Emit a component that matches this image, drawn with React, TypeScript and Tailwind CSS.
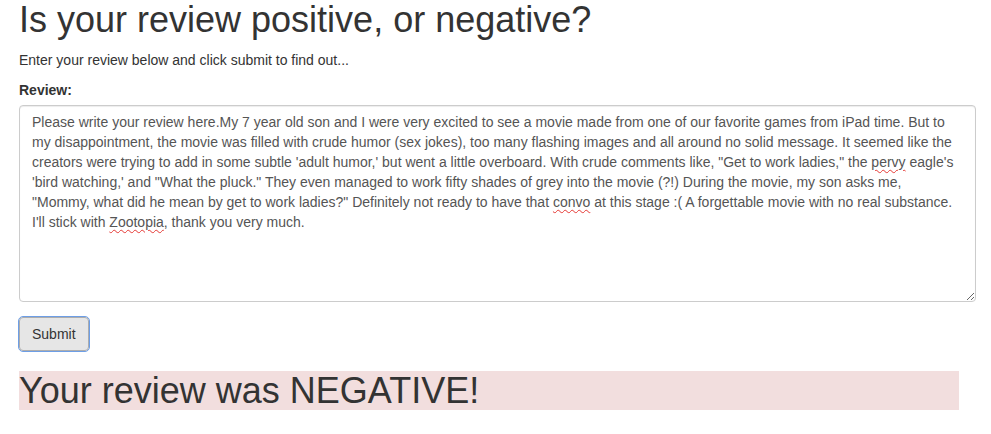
import React from 'react';

const Typo: React.FC<{ children: React.ReactNode }> = ({ children }) => (
  <span className="underline decoration-wavy decoration-[#e53935] decoration-1 underline-offset-[2px]">{children}</span>
);

const App: React.FC = () => {
  return (
    <div className="min-h-screen bg-white pl-[19px] pr-[15px] text-[14px] leading-[20px] text-[#333] font-['Liberation_Sans',Arial,sans-serif]">
      <h1 className="m-0 mb-[10px] text-[36px] leading-[1.1] font-normal">Is your review positive, or negative?</h1>
      <p className="mb-[10px]">Enter your review below and click submit to find out...</p>

      <form className="block" onSubmit={(e) => e.preventDefault()}>
        <div className="mb-[15px]">
          <label className="inline-block mb-[5px] font-bold">Review:</label>
          {/* styled like a textarea so the spellcheck squiggles can be shown */}
          <div className="h-[197px] w-full resize overflow-auto rounded-[4px] border border-[#ccc] bg-white px-[12px] py-[6px] text-[#555] shadow-[inset_0_1px_1px_rgba(0,0,0,0.075)]">
            <div className="whitespace-nowrap">Please write your review here.My 7 year old son and I were very excited to see a movie made from one of our favorite games from iPad time. But to</div>
            <div className="whitespace-nowrap">my disappointment, the movie was filled with crude humor (sex jokes), too many flashing images and all around no solid message. It seemed like the</div>
            <div className="whitespace-nowrap">creators were trying to add in some subtle 'adult humor,' but went a little overboard. With crude comments like, "Get to work ladies," the <Typo>pervy</Typo> eagle's</div>
            <div className="whitespace-nowrap">'bird watching,' and "What the pluck." They even managed to work fifty shades of grey into the movie (?!) During the movie, my son asks me,</div>
            <div className="whitespace-nowrap">"Mommy, what did he mean by get to work ladies?" Definitely not ready to have that <Typo>convo</Typo> at this stage :( A forgettable movie with no real substance.</div>
            <div className="whitespace-nowrap">I'll stick with <Typo>Zootopia</Typo>, thank you very much.</div>
          </div>
        </div>
        <button
          type="submit"
          className="h-[34px] rounded-[4px] border border-[#adadad] bg-[#e6e6e6] px-[12px] py-[6px] text-[14px] leading-[20px] text-[#333] outline outline-1 outline-[#6d9ee6]"
        >
          Submit
        </button>
      </form>

      <h1 className="mt-[20px] w-[940px] bg-[#f2dede] text-[36px] leading-[1.1] font-normal">Your review was NEGATIVE!</h1>
    </div>
  );
};

export default App;
